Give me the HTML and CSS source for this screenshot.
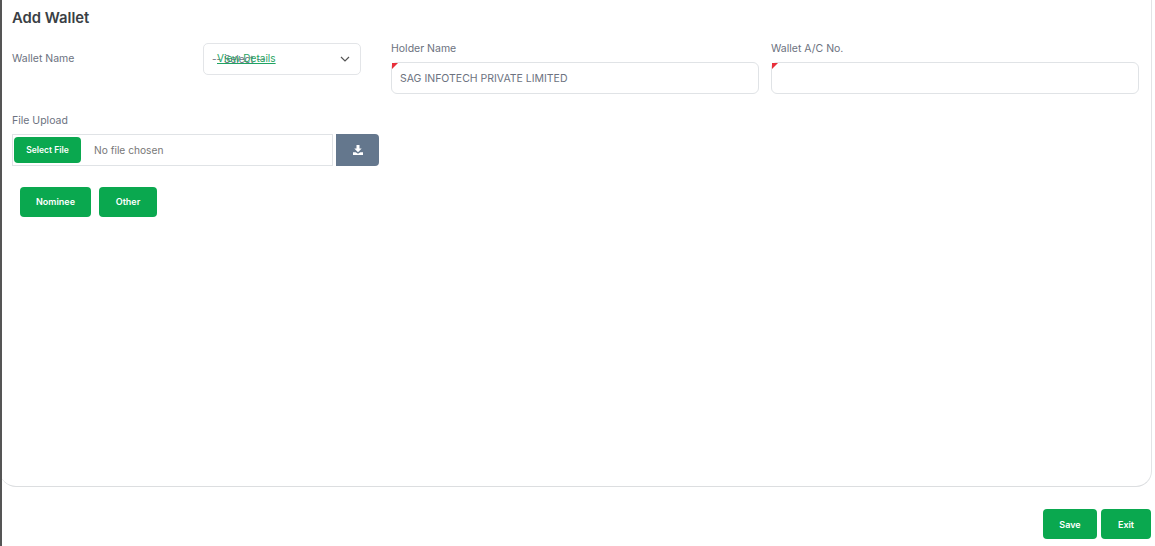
FILE: index.html
```html
<!DOCTYPE html>
<html lang="en">
<head>
  <meta charset="UTF-8" />
  <title>Add Wallet</title>
  <link rel="stylesheet" href="styles.css">
</head>
<body>

  <div class="card">
    <h1 class="title">Add Wallet</h1>

    <div class="form-row">
      <div class="wallet-name">
        <label class="side-label">Wallet Name</label>
        <div class="select-box">
          <span class="select-text">-- Select --</span>
          <a class="view-link" href="#">View Details</a>
          <svg class="chevron" width="10" height="6" viewBox="0 0 10 6">
            <path d="M1 1l4 4 4-4" fill="none" stroke="#555" stroke-width="1.2" />
          </svg>
        </div>
      </div>

      <div class="field holder">
        <label class="top-label">Holder Name</label>
        <div class="text-box required">SAG INFOTECH PRIVATE LIMITED</div>
      </div>

      <div class="field account">
        <label class="top-label">Wallet A/C No.</label>
        <div class="text-box required"></div>
      </div>
    </div>

    <div class="upload-group">
      <label class="top-label upload-label">File Upload</label>
      <div class="upload-row">
        <div class="file-box">
          <span class="btn btn-file">Select File</span>
          <span class="file-text">No file chosen</span>
        </div>
        <div class="download-btn">
          <svg width="12" height="12" viewBox="0 0 12 12">
            <path d="M4.5 1h3v3.500h2.200L6 8.200 2.300 4.500h2.200z" fill="#fff" />
            <path d="M1 8.300h2.700L6 9.800l2.300-1.500H11V11H1z" fill="#fff" />
          </svg>
        </div>
      </div>
    </div>

    <div class="extra-buttons">
      <span class="btn btn-nominee">Nominee</span>
      <span class="btn btn-other">Other</span>
    </div>
  </div>

  <div class="footer">
    <span class="btn btn-save">Save</span>
    <span class="btn btn-exit">Exit</span>
  </div>

</body>
</html>
```

FILE: styles.css
```css
html, body {
  height: 100%;
}

body {
  font-family: Inter, "Noto Sans", Arial, sans-serif;
  background: #fff;
  margin: 0;
  padding: 0;
  border-left: 2px solid #555;
  box-sizing: border-box;
  height: 546px;
  overflow: hidden;
  color: #6c7280;
}

.card {
  box-sizing: border-box;
  height: 487px;
  margin-right: 3px;
  margin-left: -2px;
  padding: 9px 0 0 12px;
  border-right: 1px solid #e2e4e6;
  border-bottom: 1px solid #dcdee0;
  border-radius: 0 0 16px 16px;
}

.title {
  font-size: 14.8px;
  line-height: 18px;
  font-weight: 600;
  color: #3a3f45;
  margin: 0 0 15px;
}

.form-row {
  display: flex;
  align-items: flex-start;
}

.wallet-name {
  display: flex;
  width: 349px;
  margin-top: 1px;
  margin-right: 30px;
}

.side-label {
  width: 191px;
  font-size: 10.5px;
  line-height: 32px;
}

.select-box {
  position: relative;
  box-sizing: border-box;
  display: flex;
  align-items: center;
  justify-content: space-between;
  width: 158px;
  height: 32px;
  padding: 0 10px 0 8px;
  border: 1px solid #e3e5e8;
  border-radius: 5px;
  font-size: 10px;
}

/* the link sits on top of the select text in the original */
.view-link {
  position: absolute;
  left: 13px;
  top: 8px;
  font-size: 10.1px;
  color: #1fa463;
}

.field {
  width: 368px;
  margin-right: 12px;
}

.account {
  margin-right: 0;
}

.top-label {
  display: block;
  font-size: 10.5px;
  line-height: 13px;
  margin-bottom: 7px;
}

.text-box {
  position: relative;
  box-sizing: border-box;
  height: 32px;
  padding: 0 8px;
  border: 1px solid #e0e3e6;
  border-radius: 6px;
  font-size: 10.5px;
  line-height: 32px;
}

.required::before {
  content: "";
  position: absolute;
  top: 0;
  left: 0;
  width: 0;
  height: 0;
  border-top: 6px solid #e8303a;
  border-right: 6px solid transparent;
}

.upload-group {
  margin-top: 20px;
}

.upload-row {
  display: flex;
  width: 367px;
}

.file-box {
  box-sizing: border-box;
  display: flex;
  align-items: center;
  width: 321px;
  height: 32px;
  padding-left: 1px;
  border: 1px solid #e0e3e6;
  font-size: 10.2px;
  color: #777;
}

.file-text {
  margin-left: 13px;
}

.download-btn {
  display: flex;
  align-items: center;
  justify-content: center;
  width: 43px;
  height: 32px;
  margin-left: 3px;
  background: #64778d;
  border-radius: 0 4px 4px 0;
}

.btn {
  display: inline-flex;
  align-items: center;
  justify-content: center;
  background: #0aa84f;
  color: #fff;
  font-size: 9px;
  font-weight: 600;
  border-radius: 4px;
}

.btn-file {
  width: 67px;
  height: 26px;
  font-size: 8.5px;
}

.extra-buttons {
  display: flex;
  gap: 8px;
  margin: 21px 0 0 8px;
}

.btn-nominee {
  box-sizing: border-box;
  width: 71px;
  height: 30px;
  padding-bottom: 1px;
}

.btn-other {
  box-sizing: border-box;
  width: 58px;
  height: 30px;
  padding-bottom: 1px;
}

.footer {
  display: flex;
  justify-content: flex-end;
  gap: 4px;
  padding: 22px 4px 0 0;
}

.btn-save {
  width: 54px;
  height: 30px;
}

.btn-exit {
  width: 50px;
  height: 30px;
}
```
